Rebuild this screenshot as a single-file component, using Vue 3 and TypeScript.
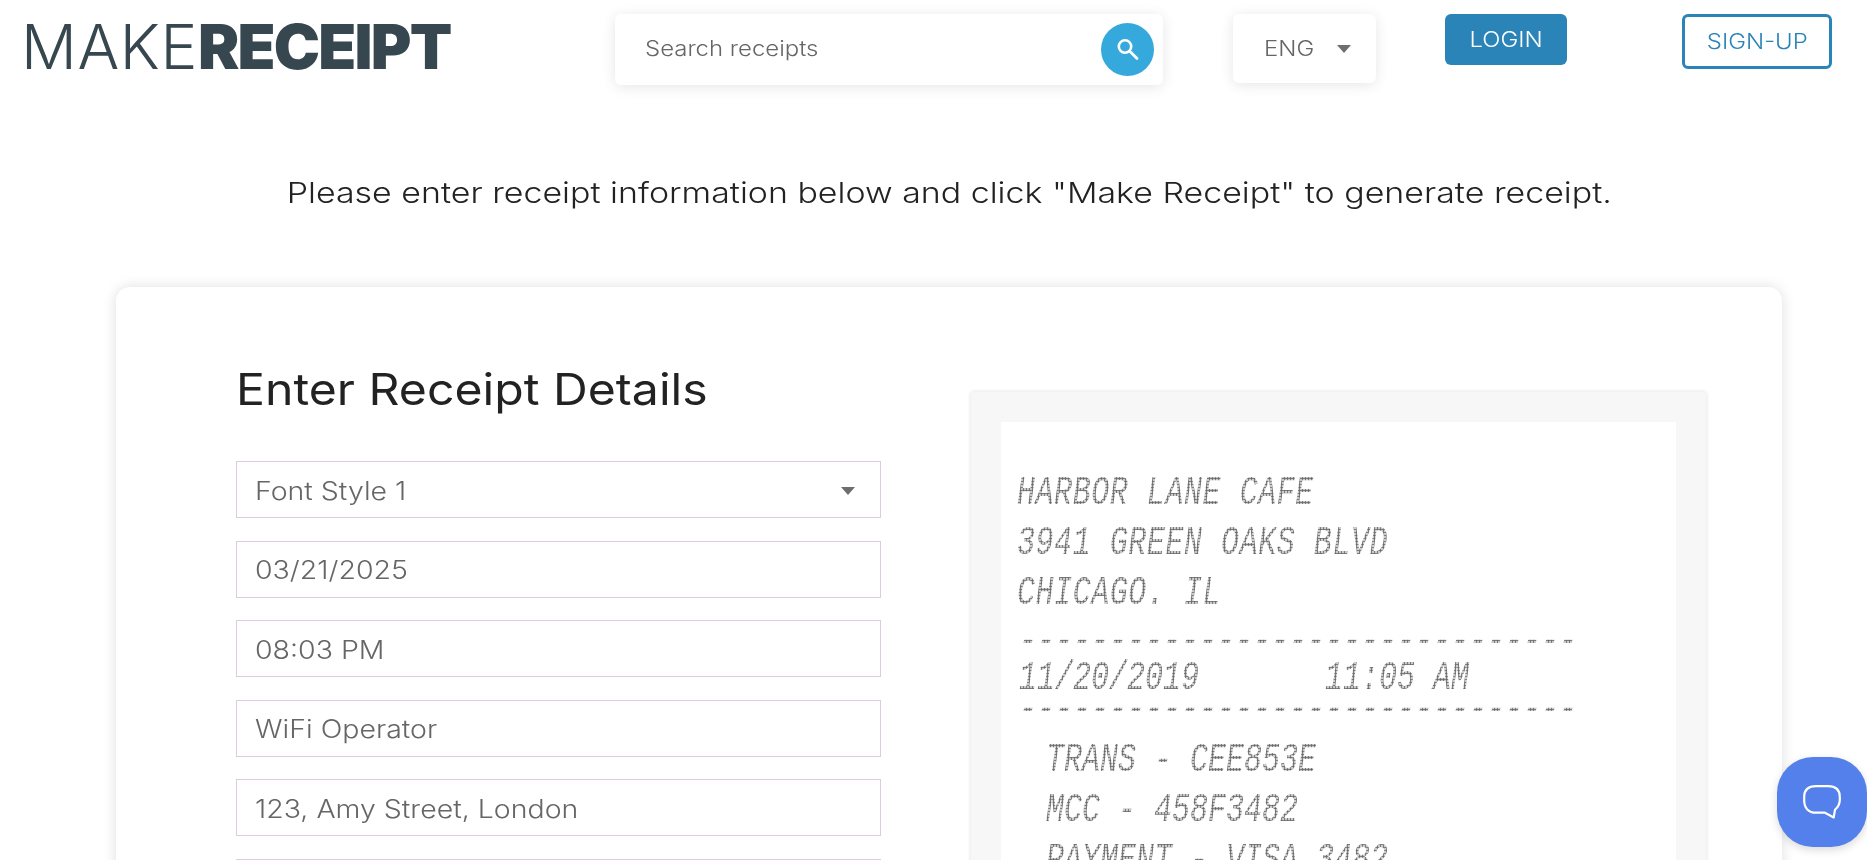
<script setup lang="ts">
const fields: string[] = ['03/21/2025', '08:03 PM', 'WiFi Operator', '123, Amy Street, London', '']
const heads: string[] = ['HARBOR LANE CAFE', '3941 GREEN OAKS BLVD', 'CHICAGO. IL']
const rules: string[] = ['-------------------------------', '11/20/2019       11:05 AM', '-------------------------------']
const items: string[] = ['TRANS - CEE853E', 'MCC - 458F3482', 'PAYMENT - VISA 3482']
</script>

<template>
  <div class="page">
    <header class="topbar">
      <div class="logo"><span class="logo-thin">MAKE</span><span class="logo-bold">RECEIPT</span></div>
      <div class="search">
        <span class="wide">Search receipts</span>
        <button class="search-btn" aria-label="Search">
          <svg width="24" height="24" viewBox="0 0 24 24" fill="none">
            <circle cx="9" cy="8.500" r="6.200" stroke="#fff" stroke-width="2.600" />
            <path d="M13.500 13 L21 20.500" stroke="#fff" stroke-width="2.800" stroke-linecap="round" />
          </svg>
        </button>
      </div>
      <div class="lang"><span class="wide">ENG</span><i class="tri"></i></div>
      <button class="login"><span class="wide mid">LOGIN</span></button>
      <button class="signup"><span class="wide mid">SIGN-UP</span></button>
    </header>

    <p class="intro"><span class="wide mid intro-text">Please enter receipt information below and click "Make Receipt" to generate receipt.</span></p>

    <main class="card">
      <section class="form">
        <h2><span class="wide title">Enter Receipt Details</span></h2>
        <div class="field select"><span class="wide">Font Style 1</span><i class="tri"></i></div>
        <div v-for="(f, i) in fields" :key="i" class="field"><span class="wide">{{ f }}</span></div>
      </section>
      <section class="preview">
        <div class="paper">
          <div class="lines">
            <div class="group heads"><div v-for="l in heads" :key="l" class="line">{{ l }}</div></div>
            <div class="group rules"><div v-for="(l, i) in rules" :key="i" class="line">{{ l }}</div></div>
            <div class="group items"><div v-for="l in items" :key="l" class="line">{{ l }}</div></div>
          </div>
        </div>
      </section>
    </main>

    <button class="chat" aria-label="Chat">
      <svg width="38" height="34" viewBox="0 0 38 34" fill="none">
        <path d="M13 1.200H25C32.500 1.200 36.800 5 36.800 12V15C36.800 19 34.500 22.500 32 24.800L30.700 32.500L22 27.700H13C5.500 27.700 1.200 23 1.200 15.500V12C1.200 5 5.500 1.200 13 1.200Z" stroke="#fff" stroke-width="2.200" stroke-linejoin="round" />
      </svg>
    </button>
  </div>
</template>

<style>
html, body { margin: 0; overflow: hidden; background: #fff; }
</style>

<style scoped>
.page { height: 860px; overflow: hidden; font-family: Inter, "Open Sans", sans-serif; }
button { font-family: inherit; cursor: pointer; }
.wide { display: inline-block; transform: scaleX(1.14); transform-origin: left center; white-space: nowrap; }
.mid { transform-origin: center center; }

.topbar { display: flex; align-items: flex-start; padding: 14px 0 0 21px; }
.logo { width: 433px; font-size: 62px; line-height: 66px; color: #37474f; white-space: nowrap; }
.logo-thin { font-weight: 300; letter-spacing: .6px; }
.logo-bold { font-weight: 900; letter-spacing: -1.800px; }

.search { margin-left: 161px; width: 548px; height: 71px; border-radius: 6px; background: #fff; box-shadow: 0 2px 14px rgba(0,0,0,.1); display: flex; align-items: center; padding: 0 0 3px 30px; box-sizing: border-box; position: relative; font-size: 21px; font-weight: 300; color: #666; }
.search-btn { position: absolute; right: 9px; top: 9px; width: 53px; height: 53px; border: 0; padding: 0; border-radius: 50%; background: #36a9dc; display: flex; align-items: center; justify-content: center; }

.lang { margin-left: 70px; width: 143px; height: 69px; border-radius: 6px; box-shadow: 0 2px 14px rgba(0,0,0,.1); display: flex; align-items: center; padding-left: 31px; box-sizing: border-box; font-size: 21px; font-weight: 300; color: #666; gap: 29px; }
.tri { display: block; width: 0; height: 0; border-left: 7.500px solid transparent; border-right: 7.500px solid transparent; border-top: 8px solid #6e6e6e; }

.login { margin-left: 69px; width: 122px; height: 51px; border: 0; border-radius: 6px; background: #2a84b8; color: #fff; font-size: 21px; font-weight: 300; padding: 0; }
.signup { margin-left: 115px; width: 150px; height: 55px; border: 3px solid #2a84b8; border-radius: 6px; background: #fff; color: #2a84b8; font-size: 21px; font-weight: 300; padding: 0; }

.intro { margin: 85px 0 0; padding-left: 32px; height: 48px; line-height: 46px; text-align: center; font-size: 29px; font-weight: 300; color: #222; white-space: nowrap; }
.intro-text { transform: scaleX(1.17); }

.card { margin: 69px 85px 0 116px; height: 900px; border-radius: 14px; background: #fff; box-shadow: 0 0 14px rgba(0,0,0,.13); display: flex; }
.form { margin-left: 120px; width: 645px; padding-top: 69px; }
h2 { margin: 0 0 38px; font-size: 44px; line-height: 67px; font-weight: 400; color: #222; }
.title { transform: scaleX(1.095); }
.field { height: 57px; box-sizing: border-box; border: 1.500px solid #dfcbdf; display: flex; align-items: center; justify-content: space-between; padding: 2px 25px 0 18px; font-size: 25px; font-weight: 300; color: #666; margin-bottom: 22.600px; }

.preview { margin-left: 90px; margin-top: 105px; width: 735px; height: 800px; box-sizing: border-box; padding: 30px; background: #f7f7f7; box-shadow: 0 0 4px rgba(0,0,0,.14); border-radius: 3px; }
.paper { height: 100%; background: #fff; padding-top: 46.400px; box-sizing: border-box; }
.lines {
  font-family: "Liberation Mono", monospace; font-style: italic; font-size: 30px; color: #6a6a6a; white-space: pre;
  filter: blur(.35px);
  -webkit-mask-image: radial-gradient(circle at 1.500px 1.500px, #000 .9px, rgba(0,0,0,.12) 1.600px); -webkit-mask-size: 3px 3px;
  mask-image: radial-gradient(circle at 1.500px 1.500px, #000 .9px, rgba(0,0,0,.12) 1.600px); mask-size: 3px 3px;
}
.line { height: 50px; line-height: 50px; transform: scaleY(1.35); transform-origin: left center; }
.heads { padding-left: 16px; letter-spacing: .55px; margin-bottom: 7px; }
.rules { padding-left: 18px; margin-bottom: 9.500px; }
.rules .line { height: 33px; line-height: 33px; }
.rules .line:nth-child(1) { margin-bottom: 3.500px; }
.rules .line:nth-child(2) { margin-bottom: -2px; }
.items { padding-left: 45px; }

.chat { position: fixed; left: 1777px; top: 757px; width: 90px; height: 90px; border: 0; padding: 0 0 1px; border-radius: 36px; background: #5380ea; box-shadow: 0 3px 8px rgba(0,0,0,.15); display: flex; align-items: center; justify-content: center; }
</style>
